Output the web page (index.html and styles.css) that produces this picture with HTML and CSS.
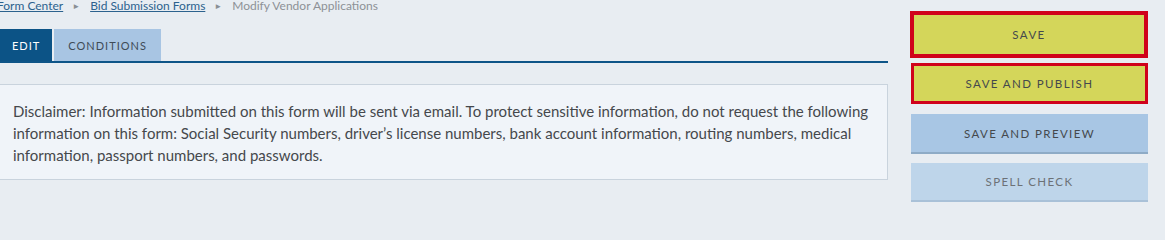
FILE: index.html
```html
<!DOCTYPE html>
<html lang="en">
<head>
<meta charset="utf-8">
<title>Modify Vendor Applications</title>
<link rel="stylesheet" href="styles.css">
</head>
<body>
<div class="page">
  <main class="main">
    <nav class="crumbs">
      <a href="#" class="crumb-link">Form Center</a>
      <span class="sep">&#9658;</span>
      <a href="#" class="crumb-link">Bid Submission Forms</a>
      <span class="sep">&#9658;</span>
      <span class="crumb-current">Modify Vendor Applications</span>
    </nav>
    <div class="tabs">
      <a href="#" class="tab tab-active">EDIT</a>
      <a href="#" class="tab">CONDITIONS</a>
    </div>
    <div class="notice">
      Disclaimer: Information submitted on this form will be sent via email. To protect sensitive information, do not request the following information on this form: Social Security numbers, driver’s license numbers, bank account information, routing numbers, medical information, passport numbers, and passwords.
    </div>
  </main>
  <aside class="side">
    <button class="btn btn-save btn-first">SAVE</button>
    <button class="btn btn-save">SAVE AND PUBLISH</button>
    <button class="btn btn-preview">SAVE AND PREVIEW</button>
    <button class="btn btn-spell">SPELL CHECK</button>
  </aside>
</div>
</body>
</html>
```

FILE: styles.css
```css
html, body {
  margin: 0;
  padding: 0;
  background: #e8edf2;
  font-family: Lato, "Open Sans", Arial, sans-serif;
  overflow: hidden;
}

.page {
  display: flex;
  gap: 22px;
  width: 1165px;
  height: 206px;
  overflow: hidden;
}

.main {
  width: 889px;
  margin-left: -1px;
  flex: none;
}

.crumbs {
  margin-top: -3px;
  margin-left: -2px;
  height: 32px;
  font-size: 12px;
  line-height: 17px;
  color: #8a8f95;
  display: flex;
  align-items: baseline;
}

.crumb-link {
  color: #2c628e;
  text-decoration: underline;
}

.sep {
  font-size: 8px;
  color: #8a8f95;
  margin: 0 10px 0 9px;
  position: relative;
  top: -1px;
}

.crumb-current {
  color: #8d9196;
}

.tabs {
  display: flex;
  gap: 2px;
  border-bottom: 2px solid #0e5588;
  padding-left: 1px;
}

.tab {
  height: 32px;
  display: flex;
  align-items: center;
  padding: 0 12px;
  font-size: 11px;
  letter-spacing: 1px;
  text-decoration: none;
  background: #a8c5e3;
  color: #3f4b57;
}

.tab + .tab {
  padding: 0 14px;
}

.tab-active {
  background: #0c5386;
  color: #ffffff;
}

.notice {
  margin-top: 21px;
  background: #f0f4f9;
  border: 1px solid #c9d3dd;
  padding: 15px 16px 13px 13px;
  font-size: 15px;
  line-height: 22px;
  color: #45484c;
}

.side {
  width: 238px;
  flex: none;
  display: flex;
  flex-direction: column;
  padding-top: 11px;
}

.btn {
  display: block;
  font-family: inherit;
  font-size: 11.5px;
  letter-spacing: 1.4px;
  color: #45494d;
  border: none;
  width: 237px;
  margin-left: 1px;
  cursor: pointer;
}

.btn-save {
  background: #d4d65a;
  border: 3px solid #d0021b;
  height: 41px;
  margin-top: 5px;
}

.btn-first {
  width: 238px;
  margin-left: 0;
  margin-top: 0;
  height: 47px;
  border-width: 4px;
}

.btn-preview {
  background: #a8c6e4;
  border-bottom: 2px solid #8eabc6;
  height: 40px;
  margin-top: 10px;
}

.btn-spell {
  background: #bed5ea;
  border-bottom: 2px solid #a9c1d8;
  color: #6c7176;
  height: 39px;
  margin-top: 9px;
}
```
